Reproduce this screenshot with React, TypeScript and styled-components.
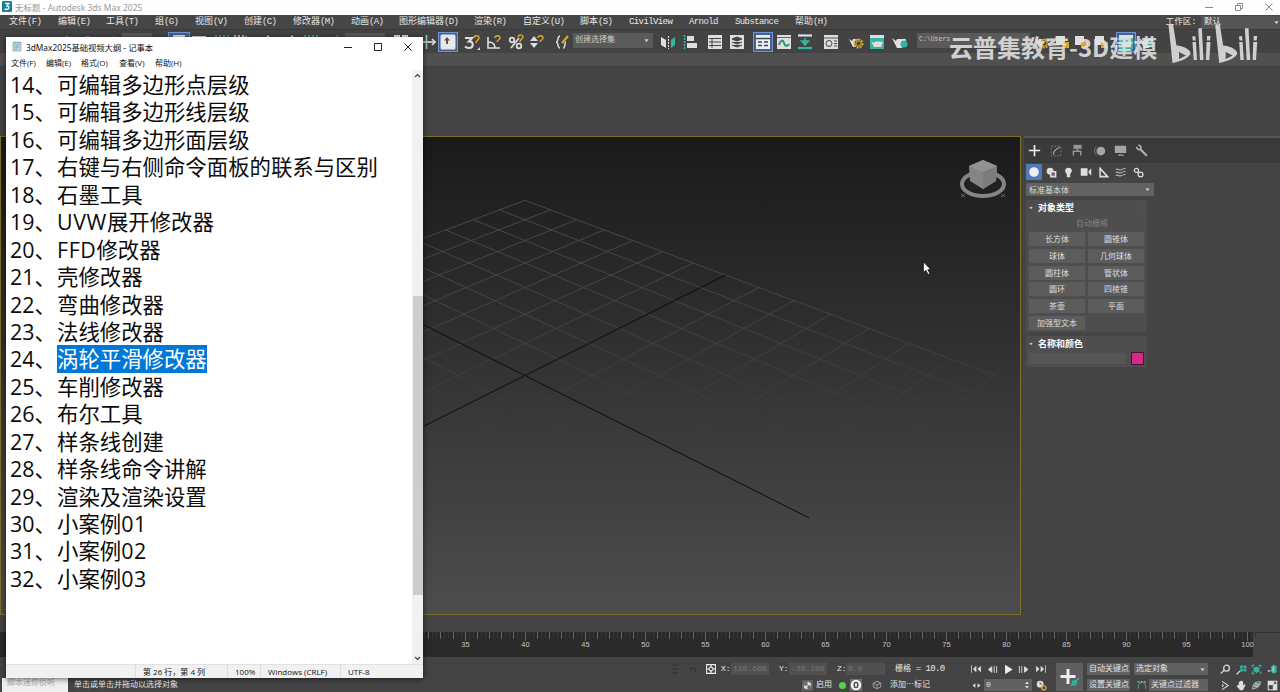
import React from 'react'
import styled, { createGlobalStyle } from 'styled-components'

const sans = `"Open Sans", "Noto Sans CJK SC", sans-serif`
const mono = `"Liberation Mono", "Noto Sans CJK SC", monospace`

const teal = '#35b5a0'
const gold = '#d9a62b'

const GlobalStyle = createGlobalStyle`
  * {
    box-sizing: border-box;
  }
  body {
    margin: 0;
    overflow: hidden;
    background: #444;
    font-family: ${sans};
  }
  svg {
    display: block;
    flex: none;
  }
`

const Screen = styled.div`
  position: relative;
  display: flex;
  flex-direction: column;
  width: 1280px;
  height: 692px;
  overflow: hidden;
  background: #444;
  color: #ddd;
  white-space: nowrap;
`

/* ---------- mixed latin / chinese labels ---------- */

const Latin = styled.span<{ $note?: boolean }>`
  font-family: ${(p) => (p.$note ? 'inherit' : '"Liberation Mono", monospace')};
  font-size: ${(p) => (p.$note ? 'inherit' : '9px')};
  letter-spacing: ${(p) => (p.$note ? '0.6px' : '-0.6px')};
`

const Mixed = ({ text, note }: { text: string; note?: boolean }) => (
  <span>
    {text.split(/([ -~]+)/).map((part, i) => (i % 2 ? <Latin key={i} $note={note}>{part}</Latin> : part))}
  </span>
)

/* ---------- title bar ---------- */

const TitleBar = styled.div`
  display: flex;
  align-items: center;
  height: 15px;
  padding: 0 7px 2px 1px;
  background: #fefefe;
  color: #9a9a9a;
  font-size: 9px;
`

const TitleText = styled.div`
  flex: 1;
  padding-left: 3px;
  font-family: "Noto Sans", "Noto Sans CJK SC", sans-serif;
  font-size: 8.5px;
`

const WindowButtons = styled.div<{ $gap: number; $color: string }>`
  display: flex;
  align-items: center;
  gap: ${(p) => p.$gap}px;
  color: ${(p) => p.$color};
`

/* ---------- menu bar ---------- */

const MenuBar = styled.div`
  display: flex;
  align-items: center;
  height: 14px;
  padding-left: 9px;
  background: #464646;
  font-family: ${mono};
  font-size: 9px;
  line-height: 12px;
  color: #e6e6e6;
`

const MenuItem = styled.div<{ $w: number }>`
  flex: none;
  width: ${(p) => p.$w}px;
`

const Workspace = styled.div`
  display: flex;
  align-items: center;
  gap: 5px;
  margin-left: auto;
  font-size: 8.5px;
`

const WorkspaceSelect = styled.div`
  display: flex;
  align-items: center;
  justify-content: space-between;
  width: 79px;
  height: 13px;
  padding: 0 1px 0 3px;
  background: #555;
`

/* ---------- toolbar ---------- */

const Toolbar = styled.div`
  display: flex;
  align-items: center;
  height: 24px;
  background: #434343;
  border-top: 1px solid #3a3a3a;
`

const Slot = styled.div<{ $ml: number; $on?: boolean; $w?: number }>`
  display: flex;
  align-items: center;
  justify-content: center;
  flex: none;
  width: ${(p) => p.$w || 18}px;
  height: 20px;
  margin-left: ${(p) => p.$ml}px;
  border: ${(p) => (p.$on ? '1px solid #6f93cf' : 'none')};
  background: ${(p) => (p.$on ? '#45618f' : 'transparent')};
`

const ToolSelect = styled.div<{ $ml: number; $w: number; $fs?: number }>`
  display: flex;
  align-items: flex-start;
  justify-content: space-between;
  flex: none;
  width: ${(p) => p.$w}px;
  height: 15px;
  margin: 0 0 2px ${(p) => p.$ml}px;
  padding: 0 4px 0 2px;
  background: #5a5a5a;
  color: #c9c9c9;
  font-family: ${mono};
  font-size: ${(p) => p.$fs || 8}px;
  line-height: 13px;
`

const Ribbon = styled.div`
  height: 83px;
  background: linear-gradient(#505050 13px, #3c3c3c 13px, #444 15px);
`

/* ---------- workspace ---------- */

const Main = styled.div`
  display: flex;
  height: 479px;
`

const Viewport = styled.div`
  flex: none;
  width: 1021px;
  height: 479px;
  border: 1px solid #7d7029;
  background: linear-gradient(#1a1a1a, #343434 50%, #4d4d4d);
`

const Panel = styled.div`
  flex: 1;
  margin-left: 3px;
  border-top: 2px solid #565656;
`

const PanelTabs = styled.div`
  display: flex;
  align-items: center;
  height: 25px;
  padding-left: 2px;
  background: #3a3a3a;
`

const PanelKinds = styled.div`
  display: flex;
  align-items: center;
  height: 18px;
  padding-left: 2px;
`

const Cell = styled.div<{ $w: number; $on?: boolean }>`
  display: flex;
  align-items: center;
  justify-content: center;
  flex: none;
  width: ${(p) => p.$w}px;
  height: 16px;
  background: ${(p) => (p.$on ? '#5379bd' : 'transparent')};
`

const PanelSelect = styled.div`
  display: flex;
  align-items: center;
  justify-content: space-between;
  width: 128px;
  height: 13px;
  margin: 2px 0 4px 2px;
  padding: 0 4px 0 3px;
  background: #626262;
  color: #d8d8d8;
  font-size: 8px;
`

const Rollout = styled.div<{ $h: number }>`
  width: 121px;
  height: ${(p) => p.$h}px;
  margin: 0 0 4px 2px;
  background: #4e4e4e;
  border-right: 1px solid #484848;
`

const RolloutHead = styled.div`
  display: flex;
  align-items: center;
  gap: 5px;
  height: 15px;
  padding: 0 3px 0 3px;
  color: #fff;
  font-size: 9px;
  font-weight: 700;
  line-height: 12px;
`

const Grip = styled.span`
  margin-left: auto;
  color: #666;
  font-weight: 400;
`

const AutoGrid = styled.div`
  height: 17px;
  padding-left: 50px;
  color: #808080;
  font-size: 8px;
  line-height: 15px;
`

const ObjectGrid = styled.div`
  display: grid;
  grid-template-columns: 56px 56px;
  grid-auto-rows: 14px;
  gap: 2.8px 3px;
  padding-left: 3px;
`

const ObjectButton = styled.div`
  background: #5c5c5c;
  color: #dedede;
  font-size: 8px;
  line-height: 14px;
  text-align: center;
`

const NameRow = styled.div`
  display: flex;
  align-items: center;
  justify-content: space-between;
  height: 14px;
  padding: 0 2px 0 3px;
`

const NameInput = styled.div`
  width: 97px;
  height: 11px;
  background: #555;
`

const Swatch = styled.div`
  width: 13px;
  height: 13px;
  border: 1px solid #4b1434;
  background: #d42a86;
`

/* ---------- time line and status ---------- */

const Timeline = styled.div`
  height: 27px;
  margin-top: 16px;
  background: #444;
`

const Status = styled.div`
  display: flex;
  height: 34px;
  padding-top: 4px;
  background: #444;
  font-family: ${mono};
  font-size: 8px;
  color: #e0e0e0;
`

const StatusGroup = styled.div<{ $w: number }>`
  display: flex;
  flex-direction: column;
  flex: none;
  gap: 2px;
  width: ${(p) => p.$w}px;
`

const StatusRow = styled.div<{ $pl?: number }>`
  display: flex;
  flex: none;
  align-items: center;
  height: 14px;
  padding-left: ${(p) => p.$pl || 0}px;
`

const Listener = styled.div`
  width: 66px;
  height: 14px;
  margin: 0 6px 0 2px;
  padding-left: 5px;
  background: #efefef;
  color: #aaa;
  line-height: 10px;
`

const Label = styled.div<{ $w: number }>`
  flex: none;
  width: ${(p) => p.$w}px;
  color: #e4e4e4;
  line-height: 12px;
`

const Field = styled.div<{ $w: number; $mr?: number; $bright?: boolean }>`
  display: flex;
  align-items: center;
  justify-content: space-between;
  flex: none;
  width: ${(p) => p.$w}px;
  height: 12px;
  margin-right: ${(p) => p.$mr || 0}px;
  padding: 0 3px 0 2px;
  background: ${(p) => (p.$bright ? '#606060' : '#505050')};
  color: ${(p) => (p.$bright ? '#e0e0e0' : '#787878')};
  line-height: 12px;
`

const KeyButton = styled.div`
  display: flex;
  align-items: center;
  justify-content: center;
  width: 27px;
  height: 28px;
  margin: 1px 4px 0 0;
  background: #5e5e5e;
`

const Dot = styled.div`
  width: 7px;
  height: 7px;
  border-radius: 50%;
  background: #4fd94a;
`

/* ---------- notepad ---------- */

const Notepad = styled.div`
  position: absolute;
  left: 6px;
  top: 37px;
  display: flex;
  flex-direction: column;
  width: 417px;
  height: 641px;
  background: #fff;
  color: #111;
  box-shadow: 0 1px 6px rgba(0, 0, 0, 0.6);
`

const NoteTitle = styled.div`
  display: flex;
  align-items: center;
  height: 19px;
  padding: 0 11px 0 6px;
  font-family: "Noto Sans", "Noto Sans CJK SC", sans-serif;
  font-size: 8.3px;
`

const NoteName = styled.div`
  flex: 1;
  padding-left: 4px;
`

const NoteMenu = styled.div`
  display: flex;
  height: 14px;
  padding-left: 5px;
  font-size: 8px;
  line-height: 14px;
`

const NoteMenuItem = styled.div<{ $w: number }>`
  width: ${(p) => p.$w}px;
`

const NoteBody = styled.div`
  display: flex;
  height: 594px;
`

const Lines = styled.div`
  flex: 1;
  padding: 1px 0 0 4px;
  font-size: 21.4px;
  line-height: 27.44px;
  color: #0c0c0c;
`

const Line = styled.div`
  display: flex;
  height: 27.44px;
`

const Num = styled.span`
  width: 47px;
`

const LineText = styled.span<{ $selected: boolean }>`
  background: ${(p) => (p.$selected ? '#0078d7' : 'transparent')};
  color: ${(p) => (p.$selected ? '#fff' : 'inherit')};
`

const Scrollbar = styled.div`
  display: flex;
  flex-direction: column;
  align-items: center;
  justify-content: space-between;
  width: 11px;
  padding: 3px 0;
  background: #f1f1f1;
`

const Thumb = styled.div`
  width: 10px;
  height: 299px;
  margin-top: 156px;
  background: #cdcdcd;
`

const NoteStatus = styled.div`
  display: flex;
  height: 14px;
  background: #f1f1f1;
  border-top: 1px solid #e2e2e2;
  font-size: 8px;
  line-height: 14px;
`

const NoteSpacer = styled.div`
  width: 129px;
`

const NoteCell = styled.div<{ $w: number }>`
  width: ${(p) => p.$w}px;
  padding-left: 7px;
  border-left: 1px solid #dcdcdc;
`

/* ---------- overlays ---------- */

const Watermark = styled.div`
  position: absolute;
  left: 949px;
  top: 23px;
  display: flex;
  align-items: flex-end;
  gap: 8px;
  height: 40px;
  color: #e2e2e2;
  font-family: "Noto Sans CJK SC", sans-serif;
  font-size: 24px;
  font-weight: 700;
  line-height: 33px;
  opacity: 0.88;
`

const WatermarkText = styled.div`
  width: 211px;
`

const Pointer = styled.div`
  position: absolute;
  left: 922px;
  top: 261px;
`

/* ---------- icons ---------- */

const W = '#dedede'

const icons: Record<string, React.ReactNode> = {
  undo: <path d="M4 11c-2-5 1-9 7-7" fill="none" stroke={W} strokeWidth="2" />,
  redo: <path d="M12 11c2-5-1-9-7-7" fill="none" stroke={W} strokeWidth="2" />,
  link: <path d="M4 12l8-8m-3-1l4 4" fill="none" stroke={gold} strokeWidth="2" />,
  doc: <path d="M2 1h12v14H2z" fill={W} />,
  list: <path d="M1 2h14v2H1zM1 7h14v2H1z" fill={W} />,
  region: <path d="M1 2h14v12H1z" fill="none" stroke={teal} strokeWidth="1.5" strokeDasharray="2 2" />,
  cross: <path d="M2 2h12v12H2z" fill="none" stroke={W} strokeWidth="1.5" strokeDasharray="2 2" />,
  rotate: <path d="M8 1l3 4H5zM3 8a5 5 0 1 0 10 0" fill={W} />,
  place: <path d="M8 3a5 5 0 1 1-1 10zM10 1l4 4" fill={teal} stroke={teal} />,
  squares: <path d="M1 1h6v6H1zM9 1h6v6H9zM1 9h6v6H1z" fill={W} />,
  move: (
    <g fill="none" strokeWidth="1.6">
      <path d="M1 8h14" stroke={W} />
      <path d="M6.500 1v14" stroke="#8fc7bd" />
      <path d="M12 5l3 3-3 3" stroke={W} />
    </g>
  ),
  override: (
    <g>
      <rect x="0.500" y="0.500" width="15" height="15" rx="1.5" fill="#e8e8e8" />
      <path d="M7 3l3 3.500H8V10H6V6.500H4z" fill="#555" />
    </g>
  ),
  snap3: (
    <g fill="none">
      <path d="M1 4h7L5 7.500c5-.500 5 6.500 0 6.500-2.500 0-4-1.500-4-1.500" stroke={W} strokeWidth="2.200" />
      <path d="M10 4c0-3 5-3 5 0 0 2-3 2-3 5" stroke={gold} strokeWidth="1.500" />
      <path d="M16 13v3h-3z" fill={W} />
    </g>
  ),
  angle: (
    <g fill="none">
      <path d="M2 3v11h12M2 8c5 0 7 2 7 6" stroke={W} strokeWidth="1.600" />
      <path d="M9 4c0-3 5-3 5 0 0 2-3 2-3 4" stroke={gold} strokeWidth="1.500" />
    </g>
  ),
  percent: (
    <g fill="none" strokeWidth="1.800">
      <circle cx="4" cy="6" r="2.300" stroke={W} />
      <circle cx="11" cy="12" r="2.300" stroke={W} />
      <path d="M11 4L3 14" stroke={W} />
      <path d="M10 3c1-3 5-2 5 0s-3 2-3 5" stroke={gold} strokeWidth="1.500" />
    </g>
  ),
  spinner: (
    <g>
      <path d="M1 7l4-5 4 5zM1 9h8l-4 5z" fill={W} />
      <path d="M9 4c0-3 5-3 5 0 0 2-3 2-3 4" fill="none" stroke={gold} strokeWidth="1.500" />
    </g>
  ),
  braces: (
    <g fill="none" strokeWidth="1.500">
      <path d="M6 2C3 2 5 8 2 8c3 0 1 6 4 6M9 14c3 0 1-6 3-6" stroke={W} />
      <path d="M8 9l6-7" stroke={gold} strokeWidth="2.200" />
    </g>
  ),
  mirror: (
    <g>
      <path d="M1 3l5 3v8l-5-3z" fill={W} />
      <path d="M15 3l-4 3v8l4-3z" fill={teal} />
      <path d="M8.500 2v13" stroke={W} strokeDasharray="2 1" />
    </g>
  ),
  align: (
    <g>
      <path d="M2.500 1v14" stroke={teal} strokeWidth="1.500" strokeDasharray="2 1" />
      <path d="M5 2h7v5H5zM5 9h10v5H5z" fill={W} />
    </g>
  ),
  table: (
    <g>
      <path d="M1 1h14v14H1z" fill={W} />
      <path d="M2 4.500h12M2 8h12M2 11.500h12M5 4v10" stroke="#444" />
    </g>
  ),
  layers: (
    <g>
      <path d="M1 1h14v14H1z" fill={W} />
      <path d="M8 3l5 2-5 2-5-2zM3 8l5 2 5-2M3 11l5 2 5-2" fill="#444" stroke="#444" />
    </g>
  ),
  ribbon: (
    <g>
      <path d="M1 1h14v14H1z" fill="#eee" />
      <path d="M1 4.500h14M3 8h4M9 8h4M3 11.500h4M9 11.500h4" stroke="#3c4759" strokeWidth="1.500" />
    </g>
  ),
  curve: (
    <g>
      <path d="M1 1h14v14H1z" fill={W} />
      <path d="M1 3.500h14" stroke="#666" />
      <path d="M3 11c2-6 4-5 5-2s3 4 5 1" fill="none" stroke="#2b8f80" strokeWidth="2" />
    </g>
  ),
  schematic: (
    <g>
      <path d="M1 1.500h14" stroke={W} strokeWidth="2.200" />
      <path d="M8 4v5M4.500 7L8 11l3.500-4z" fill={teal} stroke={teal} strokeWidth="1.500" />
      <path d="M1 14h14" stroke={teal} strokeWidth="2.200" />
    </g>
  ),
  material: (
    <g>
      <path d="M1 1h14v14H1z" fill={W} />
      <path d="M1 4h14" stroke="#555" />
      <circle cx="6" cy="9.500" r="3" fill="none" stroke="#444" />
      <path d="M11 7h3M11 9.500h3M11 12h3" stroke="#444" />
    </g>
  ),
  teapotGear: (
    <g>
      <path d="M1 5l3 2 1-2h5l2 8H5z" fill={W} />
      <circle cx="10.500" cy="9.500" r="4" fill="#444" stroke={gold} strokeWidth="2" strokeDasharray="2 1" />
      <circle cx="10.500" cy="9.500" r="2.500" fill="none" stroke={gold} />
    </g>
  ),
  teapotFrame: (
    <g>
      <path d="M1 1h14v3H1z" fill={W} />
      <path d="M1 4h14v11H1z" fill={teal} />
      <path d="M2 7l3 2 1-1.500h5l3 .5-2 5H5z" fill={W} />
    </g>
  ),
  teapot: (
    <g>
      <path d="M0 4l4 3 1-2h6c4-1 4 3 1 5l-2 4H5z" fill={W} />
      <circle cx="12" cy="10" r="3.500" fill={teal} />
    </g>
  ),
  folder: (
    <g>
      <path d="M2 2h9v9H2z" fill={W} />
      <path d="M8 8h7v6H8z" fill={gold} />
    </g>
  ),
  create: <path d="M8 2v12M2 8h12" stroke="#eee" strokeWidth="1.800" />,
  modify: (
    <g fill="none" stroke="#6f918b">
      <path d="M2.500 2.500h11v11h-11z" strokeDasharray="2 2" />
      <path d="M5 12c0-4 2-6 7-8" stroke="#9ab" strokeWidth="1.500" />
    </g>
  ),
  hierarchy: (
    <g fill="#959595">
      <path d="M3 1h10v5H3z" />
      <path d="M8 6v3M3 14V9h9v5" fill="none" stroke="#959595" strokeWidth="1.800" />
    </g>
  ),
  motion: (
    <g>
      <circle cx="9" cy="8" r="5" fill="#a5a5a5" />
      <path d="M4 3c-3 3-3 7 0 10" fill="none" stroke="#5f8f86" />
    </g>
  ),
  display: <path d="M1 2h14v9H1zM5 13h7v1.500H5z" fill="#a5a5a5" />,
  utilities: (
    <g fill="none" stroke="#b0b0b0">
      <path d="M6.500 6.500l8 8" strokeWidth="2.800" />
      <path d="M2 3.500c0 4 4 4 5 2s0-4-3-4" strokeWidth="2" />
    </g>
  ),
  sphere: <circle cx="8" cy="8" r="5.500" fill="#eee" />,
  shapes: (
    <g>
      <circle cx="6" cy="6" r="5" fill={W} />
      <path d="M7 7h7v7H7z" fill="#666" stroke={W} strokeWidth="2.200" />
    </g>
  ),
  bulb: <path d="M8 1c6 0 6 6 2.500 9v5h-5v-5C2 7 2 1 8 1z" fill={W} />,
  camera: <path d="M1 3h9v10H1zM11.500 7L15 3v10l-3.500-4z" fill={W} />,
  ruler: <path d="M3 2l11 12H3zM3 6v8h7" fill="none" stroke={W} strokeWidth="2.200" />,
  waves: (
    <path
      d="M1 5c3-3 4 2 7 0s4-1 6-2M1 9c3-3 4 2 7 0s4-1 6-2M1 13c3-3 4 2 7 0s4-1 6-2"
      fill="none"
      stroke="#b5b5b5"
      strokeWidth="1.400"
    />
  ),
  gears: (
    <g fill="none" stroke={W} strokeWidth="1.800">
      <circle cx="5" cy="5" r="3" />
      <circle cx="11" cy="11" r="3.500" />
    </g>
  ),
  isolate: <path d="M3 3h8M3 8h8M3 13h8" fill="none" stroke="#2f2f2f" strokeWidth="1.500" />,
  lock: <path d="M4 7h8v7M5 14V5" fill="none" stroke="#333" strokeWidth="1.500" />,
  absolute: (
    <g fill="none" stroke="#eee" strokeWidth="1.700">
      <path d="M1 5V1h4M11 1h4v4M15 11v4h-4M5 15H1v-4M5 1h6M15 5v6M11 15H5M1 11V5" />
      <path d="M8 4l4 4-4 4-4-4zM8 1v3M8 12v3M1 8h3M12 8h3" />
    </g>
  ),
  adaptive: (
    <g>
      <path d="M0 0h16v16H0z" fill="#606060" />
      <circle cx="8" cy="8" r="5.500" fill="#ddd" />
      <path d="M8 8V2.500C4 3 3 5 2.500 8zM8 8v5.500c3-.5 5-2 5.500-5.500z" fill="#666" />
    </g>
  ),
  zero: (
    <g>
      <path d="M0 0h16v16H0z" fill="#707070" />
      <circle cx="8" cy="8" r="7" fill="#f4f4f4" />
      <ellipse cx="8" cy="8" rx="2.500" ry="3.500" fill="none" stroke="#444" strokeWidth="1.800" />
    </g>
  ),
  cube: <path d="M8 2l6 3v6l-6 3-6-3V5zM2 5l6 3 6-3M8 8v6" fill="none" stroke="#aaa" strokeWidth="1.400" />,
  start: <path d="M2 3v10M8 4.500L4.500 8 8 11.500zM14 4.500L10.500 8l3.500 3.500z" fill={W} stroke={W} />,
  prev: <path d="M7 4L2 8l5 4zM10.500 3v10M14 3v10" fill={W} stroke={W} strokeWidth="1.300" />,
  play: <path d="M3 1l11 7-11 7z" fill="#eee" />,
  next: <path d="M9.500 4l5 4-5 4zM2 3v10M5.500 3v10" fill={W} stroke={W} strokeWidth="1.300" />,
  end: <path d="M14 3v10M8 4.500L11.500 8 8 11.500zM2 4.500L5.500 8 2 11.500z" fill={W} stroke={W} />,
  keyMode: <path d="M6 4L1 8l5 4zM10 4l5 4-5 4z" fill={W} />,
  clock: (
    <g>
      <circle cx="6" cy="6" r="5" fill={W} />
      <path d="M6 3v3h3" fill="none" stroke="#444" />
      <circle cx="11.500" cy="11.500" r="3" fill="none" stroke={gold} strokeWidth="2" />
    </g>
  ),
  tangent: (
    <g fill="none" strokeWidth="1.500">
      <path d="M2 14c0-8 2-10 6-10s6 2 6 10" stroke={teal} />
      <path d="M1 3h14" stroke={W} strokeDasharray="3 2" />
    </g>
  ),
  zoom: (
    <g fill="none" stroke={W} strokeWidth="1.800">
      <circle cx="9.500" cy="6" r="4.200" />
      <path d="M6 9l-5 5" />
    </g>
  ),
  zoomAll: (
    <g>
      <path d="M6 2h4v4H6zM11 2h4v4h-4zM6 7h4v4H6zM11 7h4v4h-4z" fill={teal} />
      <path d="M6 10l-5 5" stroke={W} strokeWidth="1.800" />
    </g>
  ),
  extents: (
    <g fill="none" stroke={teal} strokeWidth="1.700">
      <path d="M2 5V2h3M11 2h3v3M14 11v3M2 11v3h3" />
      <path d="M8 4.500L11.500 6v4L8 12l-3.500-2V6z" fill={teal} />
    </g>
  ),
  extentsAll: (
    <g>
      <path d="M9 1l5 2v9l-5 2-3-3V4z" fill={teal} />
      <path d="M1 10h4M9 4v7" stroke={W} strokeWidth="1.500" />
    </g>
  ),
  fov: <path d="M3 2l9 6-9 6M3 6c2 1 2 3 0 4" fill="none" stroke={W} strokeWidth="1.600" />,
  hand: <path d="M4 7V3h1.500v3V1.500H7.500v5-5.500h1.500v5.500V2h1.500v6l2.500-2 1 1-4 8H6L1 9l1-1z" fill={W} />,
  orbit: (
    <g fill="none" strokeWidth="1.800">
      <path d="M2 13c0-7 4-11 12-10-1 6-5 9-12 10z" stroke="#8fb0aa" />
      <path d="M4 9h6M6 6h6" stroke={W} />
    </g>
  ),
  maximize: (
    <g>
      <path d="M1 1h14v14H1z" fill={W} />
      <path d="M3 13V8h5v5zM9 7l4-4M10 3h3v3" fill="#444" stroke="#444" />
    </g>
  ),
}

const Icon = ({ name, size = 16 }: { name: string; size?: number }) => (
  <svg width={size} height={size} viewBox="0 0 16 16">
    {icons[name]}
  </svg>
)

const CaretSvg = styled.svg`
  align-self: center;
`

const Caret = ({ size = 5 }: { size?: number }) => (
  <CaretSvg width={size} height={size} viewBox="0 0 6 6">
    <path d="M0.500 1.500h5L3 5z" fill="#ccc" />
  </CaretSvg>
)

const Controls = ({ size, gap, color, restore }: { size: number; gap: number; color: string; restore?: boolean }) => (
  <WindowButtons $gap={gap} $color={color}>
    <svg width={size} height={size} viewBox="0 0 8 8" fill="none" stroke="currentColor">
      <path d="M0 4.500h8" />
    </svg>
    <svg width={size} height={size} viewBox="0 0 8 8" fill="none" stroke="currentColor">
      <path d={restore ? 'M0.500 2.500h5v5h-5zM2.500 2V.5h5v5H6' : 'M0.500 0.500h7v7h-7z'} />
    </svg>
    <svg width={size} height={size} viewBox="0 0 8 8" fill="none" stroke="currentColor">
      <path d="M0.500 0.500l7 7M7.500 0.500l-7 7" />
    </svg>
  </WindowButtons>
)

/* ---------- data ---------- */

const menus: [string, number][] = [
  ['文件(F)', 49],
  ['编辑(E)', 48],
  ['工具(T)', 49],
  ['组(G)', 40],
  ['视图(V)', 49],
  ['创建(C)', 49],
  ['修改器(M)', 58],
  ['动画(A)', 48],
  ['图形编辑器(D)', 75],
  ['渲染(R)', 49],
  ['自定义(U)', 57],
  ['脚本(S)', 49],
  ['CivilView', 60],
  ['Arnold', 46],
  ['Substance', 60],
  ['帮助(H)', 40],
]

type Tool = { icon: string; ml: number; on?: boolean; w?: number }

const historyTools: Tool[] = [
  { icon: 'undo', ml: 58 },
  { icon: 'redo', ml: 3 },
  { icon: 'link', ml: 6 },
]

const selectTools: Tool[] = [
  { icon: 'doc', ml: 16, on: true, w: 22 },
  { icon: 'list', ml: 0 },
  { icon: 'region', ml: 5 },
  { icon: 'cross', ml: 0 },
  { icon: 'rotate', ml: 10 },
  { icon: 'rotate', ml: 6 },
  { icon: 'region', ml: 1 },
  { icon: 'place', ml: 5 },
]

const snapTools: Tool[] = [
  { icon: 'squares', ml: 7 },
  { icon: 'move', ml: 9 },
  { icon: 'override', ml: 1, on: true, w: 20 },
  { icon: 'snap3', ml: 5 },
  { icon: 'angle', ml: 4 },
  { icon: 'percent', ml: 4 },
  { icon: 'spinner', ml: 3 },
  { icon: 'braces', ml: 7 },
]

const editorTools: Tool[] = [
  { icon: 'mirror', ml: 6 },
  { icon: 'align', ml: 4 },
  { icon: 'table', ml: 7 },
  { icon: 'layers', ml: 4 },
  { icon: 'ribbon', ml: 7, on: true, w: 20 },
  { icon: 'curve', ml: 2 },
  { icon: 'schematic', ml: 3 },
  { icon: 'material', ml: 8 },
  { icon: 'teapotGear', ml: 7 },
  { icon: 'teapotFrame', ml: 3 },
  { icon: 'teapot', ml: 5 },
]

const projectTools: Tool[] = [
  { icon: 'teapotGear', ml: 3 },
  { icon: 'folder', ml: 2 },
  { icon: 'folder', ml: 1 },
  { icon: 'folder', ml: 2 },
  { icon: 'teapotFrame', ml: 6, on: true, w: 20 },
  { icon: 'teapot', ml: 2 },
]

const objects = ['长方体', '圆锥体', '球体', '几何球体', '圆柱体', '管状体', '圆环', '四棱锥', '茶壶', '平面', '加强型文本']

const outline = [
  '可编辑多边形点层级',
  '可编辑多边形线层级',
  '可编辑多边形面层级',
  '右键与右侧命令面板的联系与区别',
  '石墨工具',
  'UVW展开修改器',
  'FFD修改器',
  '壳修改器',
  '弯曲修改器',
  '法线修改器',
  '涡轮平滑修改器',
  '车削修改器',
  '布尔工具',
  '样条线创建',
  '样条线命令讲解',
  '渲染及渲染设置',
  '小案例01',
  '小案例02',
  '小案例03',
]

/* ---------- parts ---------- */

const Tools = ({ items }: { items: Tool[] }) => (
  <>
    {items.map((t, i) => (
      <Slot key={i} $ml={t.ml} $on={t.on} $w={t.w}>
        <Icon name={t.icon} />
      </Slot>
    ))}
  </>
)

// ground plane seen at 45 degrees, u and v run from -1 to 1
const project = (u: number, v: number) => {
  const a = (u + v) / 2
  const b = (u - v) / 2
  const d = 1 + 0.345 * b
  return `${(524 + (470 * a) / d).toFixed(1)},${(238.5 - (235.5 * b) / d).toFixed(1)}`
}

const Scene = () => {
  const steps = Array.from({ length: 15 }, (_, i) => (i - 7) / 7)
  return (
    <svg width="1019" height="477" viewBox="0 0 1019 477">
      <defs>
        <linearGradient id="gridFade" gradientUnits="userSpaceOnUse" x1="0" y1="60" x2="0" y2="310">
          <stop offset="0" stopColor="#505050" />
          <stop offset="0.5" stopColor="#474747" />
          <stop offset="1" stopColor="#484848" stopOpacity="0" />
        </linearGradient>
      </defs>
      <g fill="none" stroke="url(#gridFade)" strokeWidth="0.8">
        {steps.filter((s) => s !== 0).map((s) => (
          <g key={s}>
            <polyline points={`${project(s, -1)} ${project(s, 1)}`} />
            <polyline points={`${project(-1, s)} ${project(1, s)}`} />
          </g>
        ))}
      </g>
      <g fill="none" stroke="#0c0c0c" strokeWidth="1">
        <polyline points={`${project(0, -1)} ${project(0, 1)}`} />
        <polyline points={`${project(-1, 0)} ${project(1, 0)}`} />
      </g>
      <g transform="translate(959 22)">
        <ellipse cx="23" cy="25" rx="21" ry="12" fill="none" stroke="#858585" strokeWidth="4" />
        <ellipse cx="23" cy="24" rx="17" ry="9" fill="#222" />
        <path d="M23 1l14 6-1 15-13 8-13-8L9 7z" fill="#858585" />
        <path d="M23 1l14 6-14 6L9 7z" fill="#929292" />
        <path d="M23 13l14-6-1 15-13 8z" fill="#7c7c7c" />
        <path d="M1 35l4 3M5 35l-4 3M41 35l4 3M45 35l-4 3" stroke="#666" />
      </g>
    </svg>
  )
}

const Ruler = () => {
  const frames = Array.from({ length: 101 }, (_, i) => i)
  const x = (f: number) => Math.round(43.5 + f * 12.03) + 0.5
  return (
    <svg width="1280" height="27" viewBox="0 0 1280 27">
      <rect y="1" width="1253" height="25" fill="#2a2a2a" />
      <path d="M1253 1.500h27" stroke="#333" />
      {frames.map((f) => (
        <g key={f}>
          <path d={`M${x(f)} 1v${f % 5 ? 7 : 9}`} stroke="#666" />
          <path d={`M${x(f) + 4} 1v6M${x(f) + 8} 1v6`} stroke="#363636" />
        </g>
      ))}
      {frames.filter((f) => f % 5 === 0).map((f) => (
        <text key={f} x={x(f)} y="16" fill="#c4c4c4" fontSize="7.500" fontFamily="Liberation Sans, sans-serif" textAnchor="middle">
          {f}
        </text>
      ))}
    </svg>
  )
}

const CommandPanel = () => (
  <Panel>
    <PanelTabs>
      <Cell $w={17}><Icon name="create" size={15} /></Cell>
      <Cell $w={26}><Icon name="modify" size={14} /></Cell>
      <Cell $w={17}><Icon name="hierarchy" size={13} /></Cell>
      <Cell $w={27}><Icon name="motion" size={14} /></Cell>
      <Cell $w={14}><Icon name="display" size={13} /></Cell>
      <Cell $w={29}><Icon name="utilities" size={13} /></Cell>
    </PanelTabs>
    <PanelKinds>
      <Cell $w={16} $on><Icon name="sphere" size={14} /></Cell>
      <Cell $w={18}><Icon name="shapes" size={11} /></Cell>
      <Cell $w={17}><Icon name="bulb" size={11} /></Cell>
      <Cell $w={18}><Icon name="camera" size={12} /></Cell>
      <Cell $w={17}><Icon name="ruler" size={11} /></Cell>
      <Cell $w={18}><Icon name="waves" size={12} /></Cell>
      <Cell $w={17}><Icon name="gears" size={11} /></Cell>
    </PanelKinds>
    <PanelSelect>
      标准基本体
      <Caret />
    </PanelSelect>
    <Rollout $h={132}>
      <RolloutHead>
        <Caret size={4} />
        对象类型
        <Grip>⋮</Grip>
      </RolloutHead>
      <AutoGrid>自动栅格</AutoGrid>
      <ObjectGrid>
        {objects.map((name) => (
          <ObjectButton key={name}>{name}</ObjectButton>
        ))}
      </ObjectGrid>
    </Rollout>
    <Rollout $h={31}>
      <RolloutHead>
        <Caret size={4} />
        名称和颜色
      </RolloutHead>
      <NameRow>
        <NameInput />
        <Swatch />
      </NameRow>
    </Rollout>
  </Panel>
)

const StatusBar = () => (
  <Status>
    <StatusGroup $w={668}>
      <StatusRow />
      <StatusRow>
        <Listener>脚本迷你侦听</Listener>
        <Label $w={120}>单击或单击并拖动以选择对象</Label>
      </StatusRow>
    </StatusGroup>
    <StatusGroup $w={300}>
      <StatusRow>
        <Cell $w={16}><Icon name="isolate" size={12} /></Cell>
        <Cell $w={17}><Icon name="lock" size={10} /></Cell>
        <Cell $w={20}><Icon name="absolute" size={10} /></Cell>
        <Label $w={10}>X:</Label>
        <Field $w={38} $mr={10}>110.666</Field>
        <Label $w={10}>Y:</Label>
        <Field $w={38} $mr={10}>-36.106</Field>
        <Label $w={9}>Z:</Label>
        <Field $w={39} $mr={10}>0.0</Field>
        <Label $w={50}><Mixed text="栅格 = 10.0" /></Label>
      </StatusRow>
      <StatusRow $pl={130}>
        <Cell $w={18}><Icon name="adaptive" size={11} /></Cell>
        <Label $w={19}>启用</Label>
        <Cell $w={14}><Dot /></Cell>
        <Cell $w={14}><Icon name="zero" size={12} /></Cell>
        <Cell $w={27}><Icon name="cube" size={10} /></Cell>
        <Label $w={50}>添加⋯标记</Label>
      </StatusRow>
    </StatusGroup>
    <StatusGroup $w={88}>
      <StatusRow>
        <Cell $w={16}><Icon name="start" size={12} /></Cell>
        <Cell $w={17}><Icon name="prev" size={11} /></Cell>
        <Cell $w={14}><Icon name="play" size={11} /></Cell>
        <Cell $w={17}><Icon name="next" size={11} /></Cell>
        <Cell $w={18}><Icon name="end" size={12} /></Cell>
      </StatusRow>
      <StatusRow>
        <Cell $w={16}><Icon name="keyMode" size={9} /></Cell>
        <Field $w={48} $bright>
          0
          <svg width="4" height="8" viewBox="0 0 4 8">
            <path d="M0 3l2-2.500L4 3zM0 5h4L2 7.500z" fill="#ddd" />
          </svg>
        </Field>
        <Cell $w={18}><Icon name="clock" size={11} /></Cell>
      </StatusRow>
    </StatusGroup>
    <KeyButton>
      <svg width="22" height="24" viewBox="0 0 22 24">
        <path d="M9 4v15M1.500 11.500h15" stroke="#eee" strokeWidth="3" />
        <path d="M12 21l8-8M16 16c-3-1-4 4-1 4s3-3 1-4" stroke={teal} strokeWidth="1.500" fill="none" />
      </svg>
    </KeyButton>
    <StatusGroup $w={47}>
      <StatusRow><Field $w={43} $bright>自动关键点</Field></StatusRow>
      <StatusRow><Field $w={43} $bright>设置关键点</Field></StatusRow>
    </StatusGroup>
    <StatusGroup $w={83}>
      <StatusRow>
        <Field $w={74} $bright>
          选定对象
          <Caret />
        </Field>
      </StatusRow>
      <StatusRow>
        <Cell $w={15}><Icon name="tangent" size={10} /></Cell>
        <Field $w={59} $bright>关键点过滤器</Field>
      </StatusRow>
    </StatusGroup>
    <StatusGroup $w={63}>
      <StatusRow>
        <Cell $w={16}><Icon name="zoom" size={11} /></Cell>
        <Cell $w={16}><Icon name="zoomAll" size={11} /></Cell>
        <Cell $w={15}><Icon name="extents" size={11} /></Cell>
        <Cell $w={16}><Icon name="extentsAll" size={11} /></Cell>
      </StatusRow>
      <StatusRow>
        <Cell $w={16}><Icon name="fov" size={11} /></Cell>
        <Cell $w={16}><Icon name="hand" size={11} /></Cell>
        <Cell $w={15}><Icon name="orbit" size={11} /></Cell>
        <Cell $w={16}><Icon name="maximize" size={11} /></Cell>
      </StatusRow>
    </StatusGroup>
  </Status>
)

const NotepadWindow = () => (
  <Notepad>
    <NoteTitle>
      <svg width="10" height="11" viewBox="0 0 10 11">
        <path d="M1 1.500h8V10H1z" fill="#b9dbe6" stroke="#7ba6b5" strokeWidth="0.700" />
        <path d="M2.500 4h5M2.500 6h5M2.500 8h3M2 0.500v2M4 0.500v2M6 0.500v2M8 0.500v2" stroke="#5f8d9e" strokeWidth="0.600" />
      </svg>
      <NoteName>3dMax2025基础视频大纲 - 记事本</NoteName>
      <Controls size={8} gap={22} color="#222" />
    </NoteTitle>
    <NoteMenu>
      <NoteMenuItem $w={35}>文件(F)</NoteMenuItem>
      <NoteMenuItem $w={35}>编辑(E)</NoteMenuItem>
      <NoteMenuItem $w={38}>格式(O)</NoteMenuItem>
      <NoteMenuItem $w={36}>查看(V)</NoteMenuItem>
      <NoteMenuItem $w={36}>帮助(H)</NoteMenuItem>
    </NoteMenu>
    <NoteBody>
      <Lines>
        {outline.map((text, i) => (
          <Line key={text}>
            <Num>{i + 14}、</Num>
            <LineText $selected={i + 14 === 24}>
              <Mixed text={text} note />
            </LineText>
          </Line>
        ))}
      </Lines>
      <Scrollbar>
        <svg width="7" height="5" viewBox="0 0 7 5">
          <path d="M1 4l2.500-2.500L6 4" fill="none" stroke="#444" strokeWidth="1.200" />
        </svg>
        <Thumb />
        <svg width="7" height="5" viewBox="0 0 7 5">
          <path d="M1 1l2.500 2.500L6 1" fill="none" stroke="#444" strokeWidth="1.200" />
        </svg>
      </Scrollbar>
    </NoteBody>
    <NoteStatus>
      <NoteSpacer />
      <NoteCell $w={92}>第 26 行，第 4 列</NoteCell>
      <NoteCell $w={33}>100%</NoteCell>
      <NoteCell $w={80}>Windows (CRLF)</NoteCell>
      <NoteCell $w={70}>UTF-8</NoteCell>
    </NoteStatus>
  </Notepad>
)

const BiliLogo = () => (
  <svg width="90" height="40" viewBox="0 0 90 40">
    <g fill="#e2e2e2">
      {[0, 46.7].map((x) => (
        <g key={x} transform={`translate(${x} 0)`}>
          <path
            fillRule="evenodd"
            d="M0.500 2L5 1l3.500 21.500C16 23 22.500 27 22.500 30c0 4-9 8.500-18 10zM11 29v7l7-3.500z"
          />
          <path d="M24.500 19H28l1 18h-3.300zM24.200 13.500l3-.5.600 4.500h-3z" />
          <path d="M30.200 5.500l3.600-.5 1.700 32H32z" />
          <path d="M38.500 19h4l-1.200 18H38zM39 13h3.500l-.500 4.500h-3z" />
        </g>
      ))}
    </g>
  </svg>
)

export default function App() {
  return (
    <Screen>
      <GlobalStyle />
      <TitleBar>
        <svg width="11" height="13" viewBox="0 0 11 13">
          <rect x="1" y="1" width="10" height="11" rx="1" fill="#177f96" />
          <path d="M4 3.500h4L6 6c3 0 2 3.500-.500 3.500L3.500 9" fill="none" stroke="#e8fbff" strokeWidth="1.300" />
        </svg>
        <TitleText>无标题 - Autodesk 3ds Max 2025</TitleText>
        <Controls size={8} gap={22} color="#8b8b8b" restore />
      </TitleBar>
      <MenuBar>
        {menus.map(([text, w]) => (
          <MenuItem key={text} $w={w}>
            <Mixed text={text} />
          </MenuItem>
        ))}
        <Workspace>
          <Mixed text="工作区:" />
          <WorkspaceSelect>
            默认
            <Caret />
          </WorkspaceSelect>
        </Workspace>
      </MenuBar>
      <Toolbar>
        <Tools items={historyTools} />
        <ToolSelect $ml={1} $w={30} />
        <Tools items={selectTools} />
        <ToolSelect $ml={2} $w={40} />
        <Tools items={snapTools} />
        <ToolSelect $ml={2} $w={80}>
          创建选择集
          <Caret />
        </ToolSelect>
        <Tools items={editorTools} />
        <ToolSelect $ml={8} $w={113} $fs={6.5}>C:\Users</ToolSelect>
        <Tools items={projectTools} />
      </Toolbar>
      <Ribbon />
      <Main>
        <Viewport>
          <Scene />
        </Viewport>
        <CommandPanel />
      </Main>
      <Timeline>
        <Ruler />
      </Timeline>
      <StatusBar />
      <NotepadWindow />
      <Watermark>
        <WatermarkText>云普集教育-3D建模</WatermarkText>
        <BiliLogo />
      </Watermark>
      <Pointer>
        <svg width="10" height="15" viewBox="0 0 10 15">
          <path d="M1.500 1v10.500L4 9.300l2 4.200 1.800-.800-2-4.100h3z" fill="#fff" stroke="#111" strokeWidth="0.700" />
        </svg>
      </Pointer>
    </Screen>
  )
}
